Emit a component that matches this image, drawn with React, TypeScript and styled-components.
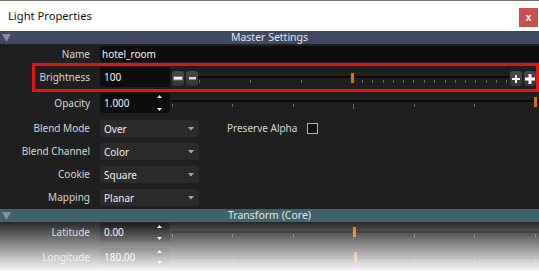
import React from "react";
import styled, { createGlobalStyle } from "styled-components";

const Global = createGlobalStyle`
  html, body { margin: 0; padding: 0; background: #1f1f1f; }
  body { font-family: "Noto Sans", "Open Sans", sans-serif; overflow: hidden; }
  * { box-sizing: border-box; }
`;

const Window = styled.div`
  position: relative;
  width: 539px;
  height: 271px;
  overflow: hidden;
  background: #1f1f1f;
  display: flex;
  flex-direction: column;
`;

const TitleBar = styled.div`
  height: 31px;
  flex: none;
  border-top: 1px solid #707070;
  background: #ffffff;
  display: flex;
  align-items: flex-start;
  justify-content: space-between;
  padding: 0 1px 0 8px;
`;

const Title = styled.span`
  margin-top: 7px;
  font-size: 11.2px;
  line-height: 16px;
  color: #111;
`;

const CloseButton = styled.div`
  margin-top: 7px;
  width: 19px;
  height: 19px;
  background: #c75050;
  color: #fff;
  font: bold 10px "Liberation Sans", sans-serif;
  display: flex;
  align-items: center;
  justify-content: center;
`;

const SectionHeader = styled.div<{ $tone: string }>`
  height: 13px;
  flex: none;
  background: ${(p) => p.$tone};
  display: flex;
  align-items: center;
`;

const HeaderArrowBox = styled.div`
  width: 12px;
  height: 13px;
  flex: none;
  display: flex;
  align-items: center;
  padding-left: 2px;
`;

const HeaderTitle = styled.span`
  flex: 1;
  text-align: center;
  font-size: 10.5px;
  line-height: 13px;
  color: #e4e4e4;
`;

const Row = styled.div<{ $h: number; $pt: number }>`
  height: ${(p) => p.$h}px;
  flex: none;
  padding-top: ${(p) => p.$pt}px;
  display: flex;
  align-items: flex-start;
`;

const Highlight = styled.div`
  height: 29px;
  flex: none;
  margin-left: 32px;
  border: 3px solid #e41414;
  padding-top: 1px;
  display: flex;
  align-items: flex-start;
`;

const Label = styled.div<{ $w?: number; $lh: number }>`
  width: ${(p) => p.$w ?? 90}px;
  flex: none;
  margin-right: 10px;
  text-align: right;
  font-size: 10px;
  line-height: ${(p) => p.$lh}px;
  color: #d6d6d6;
  white-space: nowrap;
`;

const Field = styled.div<{ $w?: number; $h: number; $open?: boolean }>`
  position: relative;
  ${(p) => (p.$open ? "flex: 1;" : `width: ${p.$w}px; flex: none;`)}
  height: ${(p) => p.$h}px;
  background: #0d0d0d;
  border-radius: ${(p) => (p.$open ? "3px 0 0 3px" : "3px")};
  padding-left: ${(p) => (p.$open ? 2 : 4)}px;
  font-size: 10px;
  line-height: ${(p) => p.$h}px;
  color: #f2f2f2;
`;

const Spinner = styled.div`
  position: absolute;
  right: 8px;
  top: 0;
  bottom: 0;
  width: 5px;
  display: flex;
  flex-direction: column;
  justify-content: space-between;
  align-items: center;
  padding: 2px 0;
`;

const StepGroup = styled.div<{ $ml: number }>`
  display: flex;
  gap: 2px;
  margin-left: ${(p) => p.$ml}px;
  margin-top: 4px;
  flex: none;
`;

const StepButton = styled.div`
  width: 12px;
  height: 15px;
  border-radius: 3px;
  background: linear-gradient(#4a4a4a, #343434);
  display: flex;
  align-items: center;
  justify-content: center;
`;

const SliderArea = styled.div<{ $h: number; $ml: number }>`
  position: relative;
  height: ${(p) => p.$h}px;
  margin-left: ${(p) => p.$ml}px;
  flex: 1;
`;

const Ruler = styled.svg`
  position: absolute;
  left: 0;
  top: 0;
  width: 100%;
  height: 100%;
  overflow: visible;
`;

const Handle = styled.div<{ $top: number; $h: number }>`
  position: absolute;
  top: ${(p) => p.$top}px;
  width: 5px;
  height: ${(p) => p.$h}px;
  background: #c8731d;
  border: 1px solid #2a1a08;
  border-radius: 1px;
`;

const Dropdown = styled.div`
  width: 99px;
  height: 17px;
  flex: none;
  background: #2b2b2b;
  border-radius: 3px;
  padding: 0 5px 0 4px;
  display: flex;
  align-items: center;
  justify-content: space-between;
  font-size: 10px;
  color: #eeeeee;
`;

const CheckLabel = styled.span`
  margin-left: 28px;
  font-size: 10px;
  line-height: 17px;
  color: #d6d6d6;
`;

const CheckBox = styled.div`
  width: 11px;
  height: 11px;
  margin-left: 10px;
  margin-top: 3px;
  border: 1px solid #b4b4b4;
  background: #111;
  flex: none;
`;

const Fade = styled.div`
  position: absolute;
  left: 0;
  right: 0;
  top: 220px;
  bottom: 0;
  background: linear-gradient(rgba(255, 255, 255, 0), rgba(255, 255, 255, 0.98));
  pointer-events: none;
`;

const Triangle = () => (
  <svg width="9" height="8" viewBox="0 0 9 8">
    <polygon points="0,0 9,0 4.5,8" fill="#8c8f99" />
  </svg>
);

const DownArrow = () => (
  <svg width="6" height="4" viewBox="0 0 6 4">
    <polygon points="0,0 6,0 3,3.5" fill="#a9a9a9" />
  </svg>
);

const SpinArrows = () => (
  <Spinner>
    <svg width="5" height="3" viewBox="0 0 5 3">
      <polygon points="2.5,0 5,3 0,3" fill="#e8e8e8" />
    </svg>
    <svg width="5" height="3" viewBox="0 0 5 3">
      <polygon points="0,0 5,0 2.5,3" fill="#e8e8e8" />
    </svg>
  </Spinner>
);

type SliderProps = {
  h: number;
  ml: number;
  trackY: number;
  tickY: number;
  ticks: number[];
  tall?: number[];
  handleX: number;
  handleTop: number;
  handleH: number;
};

const Slider = ({ h, ml, trackY, tickY, ticks, tall = [], handleX, handleTop, handleH }: SliderProps) => (
  <SliderArea $h={h} $ml={ml}>
    <Ruler>
      <rect x="0" y={trackY} width="100%" height="2" fill="#070707" />
      {ticks.map((t) => (
        <rect key={t} x={t} y={tickY} width="1" height={tall.includes(t) ? 5 : 3} fill="#6a6a6a" />
      ))}
    </Ruler>
    <Handle $top={handleTop} $h={handleH} style={{ left: handleX }} />
  </SliderArea>
);

const brightTicks = [1, 52, 103, 154, 164, 174, 185, 195, 205, 215, 226, 236, 247, 257, 267, 277, 288, 298, 308];
const wideTicks = [0, 60, 121, 181, 242, 302, 363];

const dropdowns: { label: string; value: string }[] = [
  { label: "Blend Channel", value: "Color" },
  { label: "Cookie", value: "Square" },
  { label: "Mapping", value: "Planar" },
];

export default function App() {
  return (
    <>
      <Global />
      <Window>
        <TitleBar>
          <Title>Light Properties</Title>
          <CloseButton>x</CloseButton>
        </TitleBar>

        <SectionHeader $tone="#404862">
          <HeaderArrowBox>
            <Triangle />
          </HeaderArrowBox>
          <HeaderTitle>Master Settings</HeaderTitle>
          <HeaderArrowBox />
        </SectionHeader>

        <Row $h={19} $pt={2}>
          <Label $lh={16}>Name</Label>
          <Field $open $h={16}>hotel_room</Field>
        </Row>

        <Highlight>
          <Label $w={55} $lh={20}>Brightness</Label>
          <Field $w={70} $h={20}>100</Field>
          <StepGroup $ml={2}>
            <StepButton>
              <svg width="10" height="5" viewBox="0 0 10 5">
                <rect x="0.5" y="0.5" width="9" height="3.5" fill="#f4f4f4" stroke="#777" strokeWidth="1" />
              </svg>
            </StepButton>
            <StepButton>
              <svg width="7" height="3" viewBox="0 0 7 3">
                <rect x="0" y="0" width="7" height="2.5" fill="#dcdcdc" />
              </svg>
            </StepButton>
          </StepGroup>
          <Slider h={22} ml={0} trackY={9} tickY={13} ticks={brightTicks} handleX={152} handleTop={5} handleH={12} />
          <StepGroup $ml={1}>
            <StepButton>
              <svg width="8" height="8" viewBox="0 0 8 8">
                <rect x="0" y="3" width="8" height="2" fill="#f0f0f0" />
                <rect x="3" y="0" width="2" height="8" fill="#f0f0f0" />
              </svg>
            </StepButton>
            <StepButton>
              <svg width="10" height="10" viewBox="0 0 10 10">
                <rect x="0" y="3.5" width="10" height="3" fill="#ffffff" />
                <rect x="3.5" y="0" width="3" height="10" fill="#ffffff" />
              </svg>
            </StepButton>
          </StepGroup>
        </Highlight>

        <Row $h={25} $pt={1}>
          <Label $lh={20}>Opacity</Label>
          <Field $w={70} $h={20}>
            1.000
            <SpinArrows />
          </Field>
          <Slider h={20} ml={2} trackY={7} tickY={11} ticks={wideTicks} tall={[181]} handleX={361} handleTop={3} handleH={12} />
        </Row>

        <Row $h={23} $pt={3}>
          <Label $lh={17}>Blend Mode</Label>
          <Dropdown>
            <span>Over</span>
            <DownArrow />
          </Dropdown>
          <CheckLabel>Preserve Alpha</CheckLabel>
          <CheckBox />
        </Row>

        {dropdowns.map((d) => (
          <Row key={d.label} $h={23} $pt={3}>
            <Label $lh={17}>{d.label}</Label>
            <Dropdown>
              <span>{d.value}</span>
              <DownArrow />
            </Dropdown>
          </Row>
        ))}

        <SectionHeader $tone="#41626a">
          <HeaderArrowBox>
            <Triangle />
          </HeaderArrowBox>
          <HeaderTitle>Transform (Core)</HeaderTitle>
          <HeaderArrowBox />
        </SectionHeader>

        <Row $h={23} $pt={1}>
          <Label $lh={19}>Latitude</Label>
          <Field $w={70} $h={19}>
            0.00
            <SpinArrows />
          </Field>
          <Slider h={19} ml={2} trackY={8} tickY={11} ticks={wideTicks} tall={[181]} handleX={180} handleTop={3} handleH={12} />
        </Row>

        <Row $h={23} $pt={3}>
          <Label $lh={18}>Longitude</Label>
          <Field $w={70} $h={18}>
            180.00
            <SpinArrows />
          </Field>
          <Slider h={18} ml={2} trackY={9} tickY={12} ticks={wideTicks} tall={[181]} handleX={181} handleTop={3} handleH={12} />
        </Row>

        <Fade />
      </Window>
    </>
  );
}
